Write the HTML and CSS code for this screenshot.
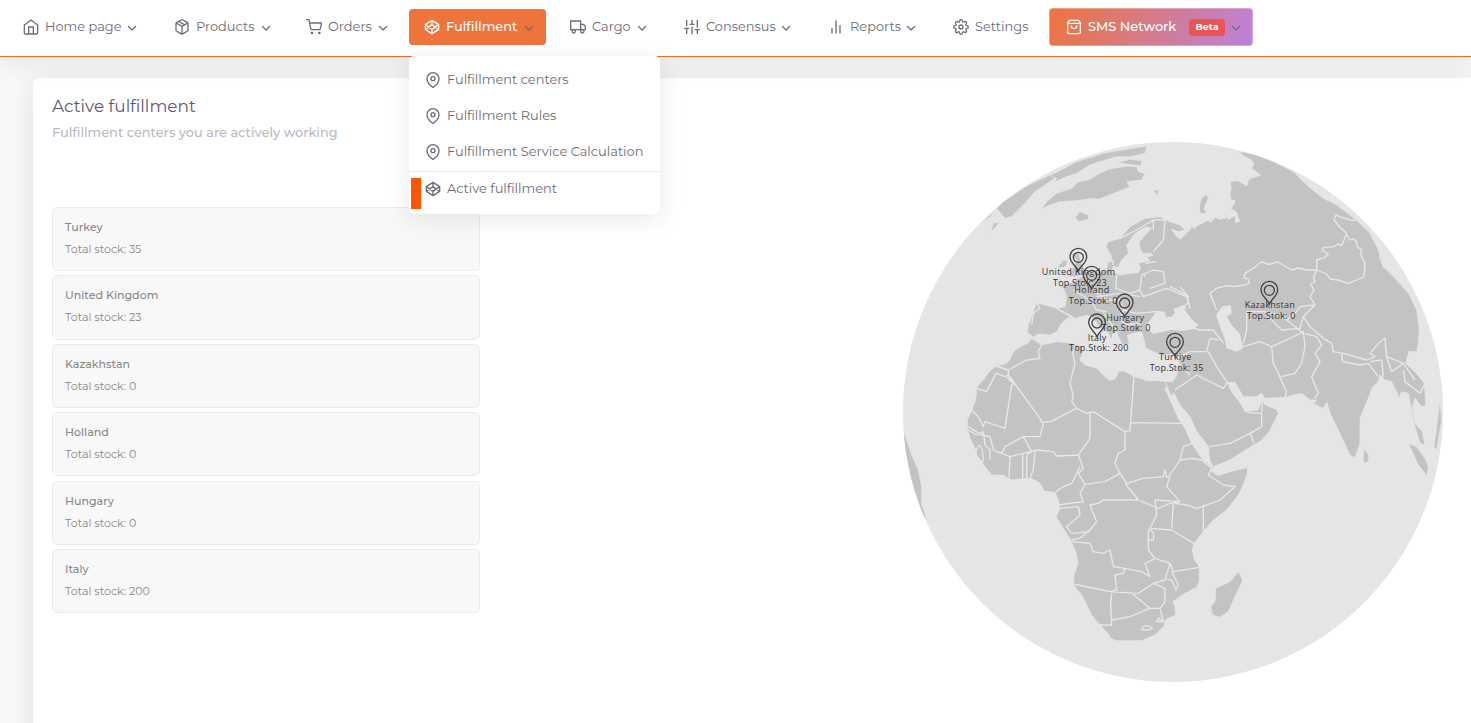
FILE: index.html
```html
<!DOCTYPE html>
<html lang="en">
<head>
<meta charset="utf-8">
<title>Active fulfillment</title>
<link rel="stylesheet" href="styles.css">
</head>
<body>
<svg class="defs" width="0" height="0">
  <defs>
    <symbol id="chev" viewBox="0 0 24 24"><path d="M5 9l7 7 7-7"/></symbol>
    <symbol id="pin" viewBox="0 0 24 24"><path d="M21 10c0 7-9 13-9 13s-9-6-9-13a9 9 0 0 1 18 0z"/><circle cx="12" cy="10" r="3"/></symbol>
    <symbol id="codepen" viewBox="0 0 24 24"><path d="M12 2l10 6.500v7L12 22 2 15.500v-7zM12 22v-6.500M22 8.500l-10 7-10-7M2 15.500l10-7 10 7M12 2v6.500"/></symbol>
    <g id="marker"><path d="M0 34C-5 20-25 10-25-9a25 25 0 0 1 50 0C25 10 5 20 0 34z"/><circle cy="-7" r="15"/></g>
  </defs>
</svg>
<header class="topbar">
  <nav class="nav">
    <a class="item home"><svg class="ico" viewBox="0 0 24 24"><path d="M2 9l10-7.500L22 9v11.500a2 2 0 0 1-2 2H4a2 2 0 0 1-2-2zM8.500 22V12h7v10"/></svg><span>Home page</span><svg class="chev"><use href="#chev"/></svg></a>
    <a class="item products"><svg class="ico" viewBox="0 0 24 24"><path d="M12.900 1.500l7 3.500A2 2 0 0 1 21 6.800v9.800a2 2 0 0 1-1.100 1.800l-7 4a2 2 0 0 1-1.800 0l-7-4A2 2 0 0 1 3 16.600V6.800A2 2 0 0 1 4.100 5l7-3.500a2 2 0 0 1 1.800 0zM3.300 6L12 11l8.700-5M12 22.500V11M7 3.700l9.500 5"/></svg><span>Products</span><svg class="chev"><use href="#chev"/></svg></a>
    <a class="item orders"><svg class="ico" viewBox="0 0 24 24"><circle cx="9" cy="21" r="1"/><circle cx="20" cy="21" r="1"/><path d="M0 1h4.500l2.500 13.400a2 2 0 0 0 2 1.600h10.500a2 2 0 0 0 2-1.600L23.500 6H6"/></svg><span>Orders</span><svg class="chev"><use href="#chev"/></svg></a>
    <div class="item fulfil">
      <svg class="ico"><use href="#codepen"/></svg><span>Fulfillment</span><svg class="chev"><use href="#chev"/></svg>
      <div class="menu">
        <a><svg class="ico"><use href="#pin"/></svg><span>Fulfillment centers</span></a>
        <a><svg class="ico"><use href="#pin"/></svg><span>Fulfillment Rules</span></a>
        <a><svg class="ico"><use href="#pin"/></svg><span>Fulfillment Service Calculation</span></a>
        <a class="current"><svg class="ico"><use href="#codepen"/></svg><span>Active fulfillment</span></a>
      </div>
    </div>
    <a class="item cargo"><svg class="ico" viewBox="0 0 24 24"><path d="M1 3h15v13H1zM16 8h4l3 3v5h-7z"/><circle cx="5.500" cy="18.500" r="2.500"/><circle cx="18.500" cy="18.500" r="2.500"/></svg><span>Cargo</span><svg class="chev"><use href="#chev"/></svg></a>
    <a class="item consensus"><svg class="ico" viewBox="0 0 24 24"><path d="M4 22v-8M4 10V2M12 22V12M12 8V2M20 22v-6M20 12V2M1 14h6M9 8h6M17 16h6"/></svg><span>Consensus</span><svg class="chev"><use href="#chev"/></svg></a>
    <a class="item reports"><svg class="ico" viewBox="0 0 24 24"><path d="M18 21V10M12 21V3M6 21v-7"/></svg><span>Reports</span><svg class="chev"><use href="#chev"/></svg></a>
    <a class="item settings"><svg class="ico" viewBox="0 0 24 24"><circle cx="12" cy="12" r="3"/><path d="M19.400 15a1.650 1.650 0 0 0 .33 1.820l.06.06a2 2 0 1 1-2.830 2.830l-.06-.06a1.650 1.650 0 0 0-2.820 1.170V21a2 2 0 0 1-4 0v-.09a1.650 1.650 0 0 0-2.900-1.200l-.06.06a2 2 0 1 1-2.830-2.830l.06-.06A1.650 1.650 0 0 0 3.090 14H3a2 2 0 0 1 0-4h.09a1.650 1.650 0 0 0 1.200-2.900l-.06-.06a2 2 0 1 1 2.830-2.830l.06.06A1.650 1.650 0 0 0 10 3.090V3a2 2 0 0 1 4 0v.09a1.650 1.650 0 0 0 2.820 1.170l.06-.06a2 2 0 1 1 2.830 2.830l-.06.06A1.650 1.650 0 0 0 20.910 10H21a2 2 0 0 1 0 4h-.09a1.650 1.650 0 0 0-1.510 1z"/></svg><span>Settings</span></a>
    <a class="item sms"><svg class="ico" viewBox="0 0 24 24"><path d="M5 2L2.500 5.500V20a2 2 0 0 0 2 2h15a2 2 0 0 0 2-2V5.500L19 2zM2.500 6.500h19M16 10.500a4 4 0 0 1-8 0"/></svg><span>SMS Network</span><b class="badge">Beta</b><svg class="chev"><use href="#chev"/></svg></a>
  </nav>
</header>
<main class="card">
  <section class="side">
    <h1>Active fulfillment</h1>
    <p class="sub">Fulfillment centers you are actively working</p>
    <ul class="list">
      <li><b>Turkey</b><span>Total stock: 35</span></li>
      <li><b>United Kingdom</b><span>Total stock: 23</span></li>
      <li><b>Kazakhstan</b><span>Total stock: 0</span></li>
      <li><b>Holland</b><span>Total stock: 0</span></li>
      <li><b>Hungary</b><span>Total stock: 0</span></li>
      <li><b>Italy</b><span>Total stock: 200</span></li>
    </ul>
  </section>
  <svg class="globe" viewBox="39 36 1620 1620">
    <clipPath id="disc"><circle cx="849" cy="846" r="810"/></clipPath>
    <circle class="ocean" cx="849" cy="846" r="810"/>
    <g clip-path="url(#disc)">
      <g class="land">
        <!-- Africa -->
        <path d="M425 625L413 640 400 645 375 660 365 675 360 690 345 702 318 708 305 718 290 735 280 750 265 765 258 780 260 790 255 815 243 845 232 870 232 895 240 925 255 955 262 980 272 990 285 1010 305 1035 340 1036 365 1050 410 1045 430 1048 450 1060 462 1083 495 1087 505 1110 508 1140 498 1160 520 1195 542 1230 557 1265 565 1300 552 1335 550 1365 575 1395 588 1420 605 1455 630 1485 655 1512 662 1525 680 1532H755L795 1515 822 1488 828 1468 857 1455 855 1430 848 1415 885 1390 920 1372 928 1355V1310L913 1290 907 1260 912 1240 940 1205 970 1170 1010 1140 1045 1095 1062 1060 1072 1030V1012L1020 1025 985 1037 965 1025 970 1012 935 985 905 940 885 895 865 865 845 820 825 775 848 755 800 752 770 752 730 738 700 722 685 725 677 745 660 752 645 740 620 715 585 705 570 690 580 665 575 648 550 640 500 635 455 645z"/>
        <!-- Eurasia -->
        <path d="M825 755L848 755 860 735 865 700 868 680 840 673 820 677 790 665 768 655 762 630 755 605 730 610 712 616 718 640 698 645 685 620 672 590 655 570 640 546 650 565 668 590 690 605 668 612 665 632 655 610 628 590 605 560 590 555 555 566 535 562 515 580 500 605 480 615 445 612 430 622 412 607 415 585 430 545 440 518 500 535 525 530 530 500 520 475 500 465 525 463 550 455 590 430 630 425 650 420 652 400 670 390 672 408 662 425 690 435 720 430 745 428 752 415 745 400 765 395 780 393 770 380 790 376 780 368 760 372 750 355 745 340 765 315 785 295 770 290 735 310 710 345 715 370 695 390 684 412 670 410 663 375 648 350 655 335 690 325 720 290 765 265 810 260 828 270 840 275 870 285 885 300 865 305 845 298 860 320 873 328 880 318 900 300 905 287 912 296 925 285 938 280 950 272 965 275 975 262 990 268 1005 265 1020 255 1015 243 1030 225 1036 213 1022 208 1020 190 1024 175 1020 155 1045 152 1070 168 1076 150 1082 145 1112 136 1098 125 1085 115 1092 100 1080 88 1062 78 1045 63 1100 75 1150 95 1210 125 1250 165 1300 205 1340 225 1400 270 1440 310 1465 360 1480 410 1520 450 1555 490 1580 540 1588 600 1585 640 1580 665 1557 665 1547 700 1575 725 1603 760 1608 825 1595 830 1575 805 1567 830 1575 880 1597 905 1605 945 1590 940 1572 880 1563 830 1555 790 1535 785 1528 805 1520 785 1505 755 1485 750 1470 735 1465 755 1447 772 1438 797 1410 865V940L1395 983 1380 975 1340 890 1320 850 1310 815 1300 835 1270 822 1280 810 1260 810 1235 790 1185 802 1125 805 1115 790 1100 800 1060 800 1035 757 1012 758 1025 785 1055 825 1065 845 1105 840 1118 805 1125 825 1160 838 1165 850 1145 890 1138 905 1110 935 1090 945 1020 990 970 1010 958 990 956 950 920 905 900 860 870 825 852 790 845 803z"/>
        <!-- Americas, Greenland and islands -->
        <path d="M453 237L470 215 500 190 545 175 565 155 600 148 625 132 655 118 710 108 740 110 745 125 765 130 755 150 710 155 720 170 690 182 660 195 625 208 610 205 560 212 510 215 480 225z"/>
        <path d="M270 285L340 215 410 168 490 130 495 145 435 185 400 225 365 260 345 265 320 235 300 262z"/>
        <path d="M480 137L560 95 640 70 770 48 765 70 720 80 680 80 630 95 600 105 560 130 530 140 490 158 500 145zM680 98L720 88 755 92 752 108z"/>
        <path d="M556 262L570 245 595 255 595 268 565 275zM302 308L310 280 330 275zM790 180L808 180 800 197zM500 415L520 390 533 392 528 410zM535 440L560 390 545 375 565 365 575 400 590 430 560 440z"/>
        <path d="M1045 1325L1058 1350 1052 1365 1035 1400 1015 1445 988 1462 968 1455 962 1430 975 1415 977 1375 1020 1355zM1420 955L1437 975 1435 995 1420 1000zM1555 940L1580 950 1605 985 1615 1010 1610 1037 1585 1005zM1650 810L1655 870 1640 960 1632 950 1640 890zM42 905L65 975 85 1020 95 1070 95 1120 110 1170 30 1100z"/>
        <path d="M930 250L928 225 935 205 950 192 955 205 942 235 950 250z"/>
      </g>
      <!-- Seas, gulfs and lakes -->
      <path class="water" d="M765 590L785 565 800 542 825 545 828 562 845 560 862 540 885 540 905 568 925 585 910 598 875 603 840 600 820 605 790 612zM855 550L850 538 880 525 890 535zM978 555L995 530 1022 525 1025 550 1010 560 1025 585 1050 612 1060 655 1040 665 1010 655 1005 630 990 590zM1015 270L990 225 1005 225 1040 245 1050 275 1035 278 1035 258zM1465 375L1520 450 1500 420 1480 415zM1240 140L1300 180 1320 205 1270 178zM700 395L715 375 740 330 750 340 750 370 720 390zM823 770L845 800 848 785 852 805 870 830 900 865 920 905 945 935 955 970 966 1012 935 985 905 940 885 895 865 865 845 820z"/>
      <g class="borders">
        <path d="M455 645L445 665 450 685 410 690 355 720 355 735 450 865 455 877 482 875 560 835 590 850 610 845 705 905 720 902 732 738M556 645L548 670 555 700 550 720 540 760 550 795 545 815 560 835M722 878L875 880M318 708L355 720M355 735L345 740 318 730 290 785 258 775M350 740L372 762 365 765 345 895 285 875 280 890 265 860 245 840M372 762L355 735M460 880L450 920 400 920 345 950 335 970 310 960 300 920 275 915 235 890M235 900L260 915 280 905 285 945 300 960 300 990M258 965Q270 925 278 970T262 980M335 970L360 980 412 967 425 965 440 960 490 965 500 978 565 975 600 925 600 850M400 920L425 965 410 975 410 1045M360 980L357 1045M398 970V1045M435 965L430 1020 420 1045M705 905L705 960 685 970 675 1000 690 1030 645 1055 585 1063 565 1030 580 1015 565 975M570 1010L545 1060 520 1070 498 1085M690 1030L710 1060 760 1045 820 1040 825 1020 830 1042 840 1035 870 990 880 950 905 940M585 1063L570 1090 580 1115 500 1125M705 1060L745 1110 640 1110 625 1120 600 1125 620 1175 600 1200 570 1225 545 1230M840 1040L830 1070 870 1115 840 1120 805 1135 750 1112M870 990L905 985 935 990 965 1015 955 1035 1000 1065 1035 1070 990 1110 950 1125 920 1135 890 1125 855 1120M940 1130L940 1205M870 1115L795 1110 800 1155 780 1195 845 1200 912 1240M850 1120L845 1195M505 1135L565 1130 570 1155 530 1190 545 1210 600 1205M545 1235L600 1240 610 1265 640 1270 660 1260 670 1310 705 1315 700 1330 675 1335 680 1380 660 1385 550 1362M705 1315L755 1325 780 1340 765 1300 795 1285 775 1260 775 1200Q795 1200 790 1230L775 1230M795 1285L840 1300 850 1325 928 1312M840 1300L825 1350 790 1360 745 1390 660 1385M825 1345L845 1350 858 1380 865 1365 845 1325M665 1390L662 1425 665 1485 630 1485M665 1470L720 1460 780 1435 810 1435 825 1415 825 1375 790 1360M720 1385L750 1410 780 1435M810 1435L820 1475 800 1475 805 1465 828 1478M755 1500Q760 1480 780 1490T755 1500"/>
        <path d="M500 535L555 566M440 518L450 535 430 550 425 585M550 480L600 510 620 540 650 545M590 430L605 480 650 510 690 510 700 540 740 550 800 545M680 435L678 475 720 490 750 480 755 435M750 480L760 500 830 475 890 500 900 535M755 435L790 420 820 425 825 460 780 475M765 400L800 395M765 440L760 430M690 325L740 300 790 270 790 300M790 270L825 270 820 330 790 365M620 500L690 490 750 500M700 540L690 570 710 585 750 580M860 580L930 600 970 600 1000 640M870 680L900 665 950 665 960 625M955 665L980 710 1012 758 1000 775 920 735 855 780M865 700L900 735M958 950L1020 940 1080 910 1115 890 1115 850 1075 848 1065 835M1080 910L1092 940M1115 850L1118 810M1060 650L1110 635 1145 650 1150 700 1165 730 1190 785 1185 802M1145 650L1200 625 1240 605 1245 650 1235 700 1215 730 1165 742M1245 610L1280 620 1295 645 1275 670 1290 695 1265 740 1285 790 1275 805M960 625L985 630"/>
        <path d="M980 540L960 490 980 475 1010 467 1030 470 1065 465 1078 460 1075 448 1062 443 1065 430 1090 415 1115 395 1135 403 1150 400 1160 395 1180 405 1205 420 1225 414 1250 420 1280 420 1270 440 1275 455 1262 462 1272 480 1260 500 1275 525 1230 530 1215 550 1190 570 1150 550 1120 545 1070 545 1070 600M895 500L870 470M840 470L870 485 895 500 893 520 870 540M1280 420L1280 390 1305 382 1315 372 1298 362 1300 352 1330 350 1345 342 1355 347 1370 310 1350 292 1332 270 1338 255 1355 262 1385 272 1400 270M1370 315L1380 330 1390 326 1398 332 1402 350 1415 360 1412 375 1425 400 1422 440 1400 450 1375 460 1345 450 1320 447 1310 432 1280 420M1275 525L1240 560 1260 590 1300 625 1325 640 1330 665 1360 670 1430 690 1455 680 1440 670 1465 640 1485 625 1490 680 1540 700M1355 672L1358 695 1410 705 1435 700 1465 740M1440 695L1475 690 1480 740M1490 680L1505 725 1540 700 1575 750M1540 720L1545 755 1590 790 1610 750 1570 720M1070 600L1060 640M1130 555L1175 600 1230 595 1240 560M1190 570L1240 610"/>
      </g>
    </g>
    <g class="markers">
      <use href="#marker" x="565" y="389"/><use href="#marker" x="605" y="443"/><use href="#marker" x="704" y="526"/><use href="#marker" x="621" y="586"/><use href="#marker" x="855" y="644"/><use href="#marker" x="1138" y="488"/>
    </g>
    <g class="labels">
      <text x="455" y="435" textLength="220">United Kingdom</text><text x="489" y="468" textLength="161">Top.Stok: 23</text>
      <text x="553" y="489" textLength="105">Holland</text><text x="536" y="522" textLength="146">Top.Stok: 0</text>
      <text x="649" y="573" textLength="113">Hungary</text><text x="635" y="603" textLength="146">Top.Stok: 0</text>
      <text x="593" y="633" textLength="56">Italy</text><text x="537" y="663" textLength="178">Top.Stok: 200</text>
      <text x="807" y="690" textLength="97">Turkiye</text><text x="779" y="723" textLength="161">Top.Stok: 35</text>
      <text x="1064" y="534" textLength="150">Kazakhstan</text><text x="1070" y="567" textLength="146">Top.Stok: 0</text>
    </g>
  </svg>
</main>
</body>
</html>
```

FILE: styles.css
```css
* { box-sizing: border-box; }
body { margin: 0; height: 723px; overflow: hidden; background: #f8f8f8; font-family: Montserrat, Inter, sans-serif; font-size: 12.930px; color: #6e6b7b; }
.defs { display: block; height: 0; }
.topbar { position: relative; z-index: 2; height: 57px; background: #fff; border-bottom: 1px solid #ed6b30; box-shadow: 0 4px 24px rgba(34,41,47,.1); padding: 9px 0 0 23px; }
.nav { display: grid; grid-template-columns: 151px 132px 103px 161px 114px 144px 125px 96px 204px; }
.item { display: flex; align-items: center; height: 36px; margin-right: 37px; white-space: nowrap; }
.item > span { flex: 1; padding-bottom: 2px; }
.ico { width: 16px; height: 16px; margin-right: 6px; flex: none; fill: none; stroke: currentColor; stroke-width: 2; stroke-linecap: round; stroke-linejoin: round; }
.chev { width: 12px; height: 12px; margin: 2px -1px 0 0; flex: none; fill: none; stroke: #6e6b7b; stroke-width: 2.500; stroke-linecap: round; stroke-linejoin: round; }
.products { margin-right: 35px; }
.orders { margin-right: 21px; }
.fulfil { position: relative; margin-right: 24px; padding: 0 12px 0 15px; border-radius: 4px; background: #ee743b; color: #fff; font-weight: 500; }
.settings { margin-right: 21px; }
.sms { height: 38px; margin: -1px 0 0; padding: 0 11px 0 16px; border-radius: 4px; color: #fff; font-weight: 500; background: linear-gradient(118deg, #ee743b, #bb82dc) border-box; border: 1px solid rgba(255,255,255,.3); }
.badge { width: 36px; height: 17px; margin-right: 5px; border-radius: 4px; background: #ea5455; font-size: 9.500px; line-height: 16px; text-align: center; }
.menu { position: absolute; left: 0; top: 47px; width: 251px; height: 158px; padding-top: 6px; background: #fff; border-radius: 5px; box-shadow: 0 5px 25px rgba(34,41,47,.1); color: #6e6b7b; font-weight: 400; }
.menu a { display: flex; align-items: center; height: 36px; padding-left: 16px; }
.menu span { padding-bottom: 2px; }
.menu .current { position: relative; height: 37px; border-top: 1px solid #ebe9f1; margin-top: 1px; padding-bottom: 2px; }
.menu .current::before { content: ""; position: absolute; left: 2px; top: 6px; width: 10px; height: 31px; background: #ff5500; }
.card { display: flex; justify-content: space-between; margin: 21px 0 0 33px; height: 670px; padding: 19px 28px 0 19px; background: #fff; border-radius: 6px 0 0 0; box-shadow: 0 4px 24px rgba(34,41,47,.12); }
.side { width: 428px; }
h1 { margin: -1px 0 0; font-size: 16.900px; line-height: 20px; font-weight: 400; color: #5e5873; }
.sub { margin: 7px 0 0; line-height: 20px; font-size: 12.900px; font-weight: 500; color: #b9b9c3; }
.list { list-style: none; margin: 64px 0 0; padding: 0; display: grid; gap: 4.100px; }
.list li { height: 64.300px; padding: 8px 12px; border: 1px solid #ebe9f1; border-radius: 5px; background: #f8f8f8; font-size: 11.050px; line-height: 22px; color: #888; }
.list b, .list span { display: block; }
.list b { font-weight: 500; }
.globe { width: 540px; height: 540px; margin-top: 45px; }
.ocean, .water { fill: #e5e5e5; }
.land { fill: #c3c3c3; stroke: #e9e9e9; stroke-width: 2; stroke-linejoin: round; }
.borders { fill: none; stroke: #e8e8e8; stroke-width: 4; stroke-linejoin: round; }
.markers { fill: none; stroke: #444; stroke-width: 4; }
.labels { font-family: "Open Sans", "Noto Sans", sans-serif; font-size: 27px; fill: #333; }
```
